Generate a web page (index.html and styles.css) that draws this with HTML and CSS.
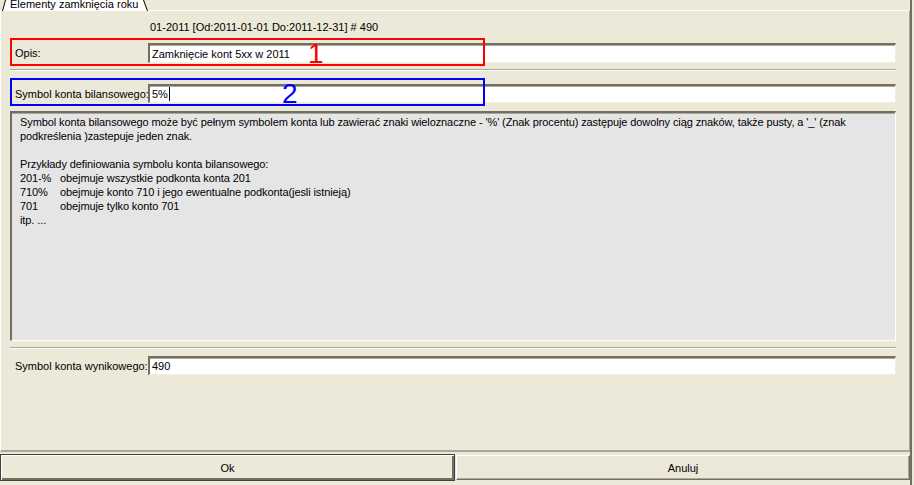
FILE: index.html
```html
<!DOCTYPE HTML>
<html>
<head>
  <meta charset="UTF-8">
  <title>Elementy zamknięcia roku</title>
  <link rel="stylesheet" href="styles.css">
</head>
<body>
  <div class="window">
    <div class="tabs">
      <div class="tab">
        <svg class="tab-shape" width="152" height="11" viewBox="0 0 152 11">
          <polygon points="2,11 5,0 143,0 147,11" fill="#fff"/>
          <line x1="2.5" y1="11" x2="5.5" y2="0" stroke="#000" stroke-width="1"/>
          <line x1="143.5" y1="0" x2="147.5" y2="11" stroke="#000" stroke-width="1"/>
        </svg>
        <span class="tab-label">Elementy zamknięcia roku</span>
      </div>
    </div>

    <div class="panel">
      <div class="period">01-2011 [Od:2011-01-01 Do:2011-12-31] # 490</div>

      <div class="row row-opis">
        <label class="field-label">Opis:</label>
        <div class="edit">Zamknięcie kont 5xx w 2011</div>
        <div class="mark mark-red"></div>
        <span class="mark-num num-red">1</span>
      </div>

      <div class="sep"></div>

      <div class="row row-bil">
        <label class="field-label">Symbol konta bilansowego:</label>
        <div class="edit">5%<span class="caret"></span></div>
        <div class="mark mark-blue"></div>
        <span class="mark-num num-blue">2</span>
      </div>

      <div class="info">
        <p class="info-intro">Symbol konta bilansowego może być pełnym symbolem konta lub zawierać znaki wieloznaczne - '%' (Znak procentu) zastępuje dowolny ciąg znaków, także pusty, a '_' (znak<br>podkreślenia )zastepuje jeden znak.</p>
        <p>Przykłady definiowania symbolu konta bilansowego:</p>
        <div class="examples">
          <span>201-%</span><span>obejmuje wszystkie podkonta konta 201</span>
          <span>710%</span><span>obejmuje konto 710 i jego ewentualne podkonta(jesli istnieją)</span>
          <span>701</span><span>obejmuje tylko konto 701</span>
          <span>itp. ...</span><span></span>
        </div>
      </div>

      <div class="sep sep-low"></div>

      <div class="row row-wyn">
        <label class="field-label">Symbol konta wynikowego:</label>
        <div class="edit">490</div>
      </div>
    </div>

    <div class="buttons">
      <button class="btn btn-default">Ok</button>
      <button class="btn">Anuluj</button>
    </div>
  </div>
</body>
</html>
```

FILE: styles.css
```css
body {
  margin: 0;
  background: #ECE9D8;
  font-family: "Liberation Sans", Arial, sans-serif;
  font-size: 11px;
  color: #000;
  width: 914px;
  height: 485px;
  overflow: hidden;
}

.window {
  width: 912px;
  height: 485px;
  box-sizing: border-box;
  border-right: 2px solid #716F64;
}

.tabs {
  height: 10px;
  overflow: visible;
}

.tab {
  position: relative;
  width: 152px;
  height: 11px;
  overflow: hidden;
}

.tab-shape {
  position: absolute;
  left: 0;
  top: 0;
}

.tab-label {
  position: relative;
  display: block;
  padding-left: 10px;
  line-height: 12px;
  margin-top: -2px;
  white-space: nowrap;
}

.panel {
  height: 442px;
  box-sizing: border-box;
  border-top: 1px solid #fff;
  border-left: 1px solid #fff;
  border-right: 1px solid #ACA899;
  border-bottom: 2px solid #ACA899;
  padding: 0 13px 0 9px;
  display: flex;
  flex-direction: column;
}

.period {
  margin-top: 10px;
  padding-left: 140px;
  line-height: 13px;
  height: 13px;
}

.row {
  position: relative;
  display: flex;
  align-items: center;
}

.row-opis { margin-top: 9px; height: 20px; }
.row-bil { margin-top: 13px; height: 19px; }
.row-wyn { margin-top: 7px; height: 19px; }

.field-label {
  width: 138px;
  flex: none;
  padding-left: 5px;
  box-sizing: border-box;
  white-space: nowrap;
}

.edit {
  flex: 1;
  height: 100%;
  box-sizing: border-box;
  background: #fff;
  border-top: 2px solid #716F64;
  border-left: 2px solid #716F64;
  border-right: 1px solid #F1EFE2;
  border-bottom: 1px solid #F1EFE2;
  box-shadow: inset 0 1px 0 #ACA899;
  padding-left: 2px;
  display: flex;
  align-items: center;
  white-space: nowrap;
}

.caret {
  display: inline-block;
  width: 1px;
  height: 14px;
  background: #000;
  margin-left: 1px;
}

.mark {
  position: absolute;
  left: 0;
  width: 475px;
  height: 28px;
  box-sizing: border-box;
  border: 2px solid;
  pointer-events: none;
}

.mark-red { top: -5px; border-color: #FF0000; }
.mark-blue { top: -6px; border-color: #0000FF; }

.mark-num {
  position: absolute;
  font-family: "Liberation Sans", Arial, sans-serif;
  font-size: 28px;
  line-height: 28px;
}

.num-red { color: #FF0000; left: 298px; top: -3px; }
.num-blue { color: #0000FF; left: 272px; top: -4px; }

.sep {
  margin-top: 6px;
  height: 1px;
  background: #ACA899;
  border-bottom: 1px solid #fff;
}

.info {
  margin-top: 8px;
  height: 230px;
  box-sizing: border-box;
  background: #E5E5E5;
  border-top: 2px solid #716F64;
  border-left: 2px solid #716F64;
  border-right: 1px solid #fff;
  border-bottom: 1px solid #fff;
  box-shadow: inset 0 1px 0 #ACA899;
  padding: 2px 8px;
  line-height: 14px;
  letter-spacing: -0.1px;
}

.info p {
  margin: 0;
  white-space: nowrap;
}

.info .info-intro {
  margin-bottom: 14px;
}

.examples {
  display: grid;
  grid-template-columns: 40px 1fr;
}

.buttons {
  display: flex;
  margin-top: 2px;
  height: 27px;
}

.btn {
  font-family: inherit;
  font-size: 11px;
  color: #000;
  height: 27px;
  padding: 0;
  background: #ECE9D8;
  border: 1px solid #fff;
  border-right-color: #716F64;
  border-bottom-color: #716F64;
  box-shadow: inset -1px -1px 0 #ACA899;
  width: 455px;
}

.btn + .btn {
  margin-left: 1px;
  height: 25px;
  margin-top: 1px;
  width: 454px;
}

.btn-default {
  border: 1px solid #404040;
  box-shadow: inset 1px 1px 0 #fff, inset -2px -2px 0 #716F64;
}
```
